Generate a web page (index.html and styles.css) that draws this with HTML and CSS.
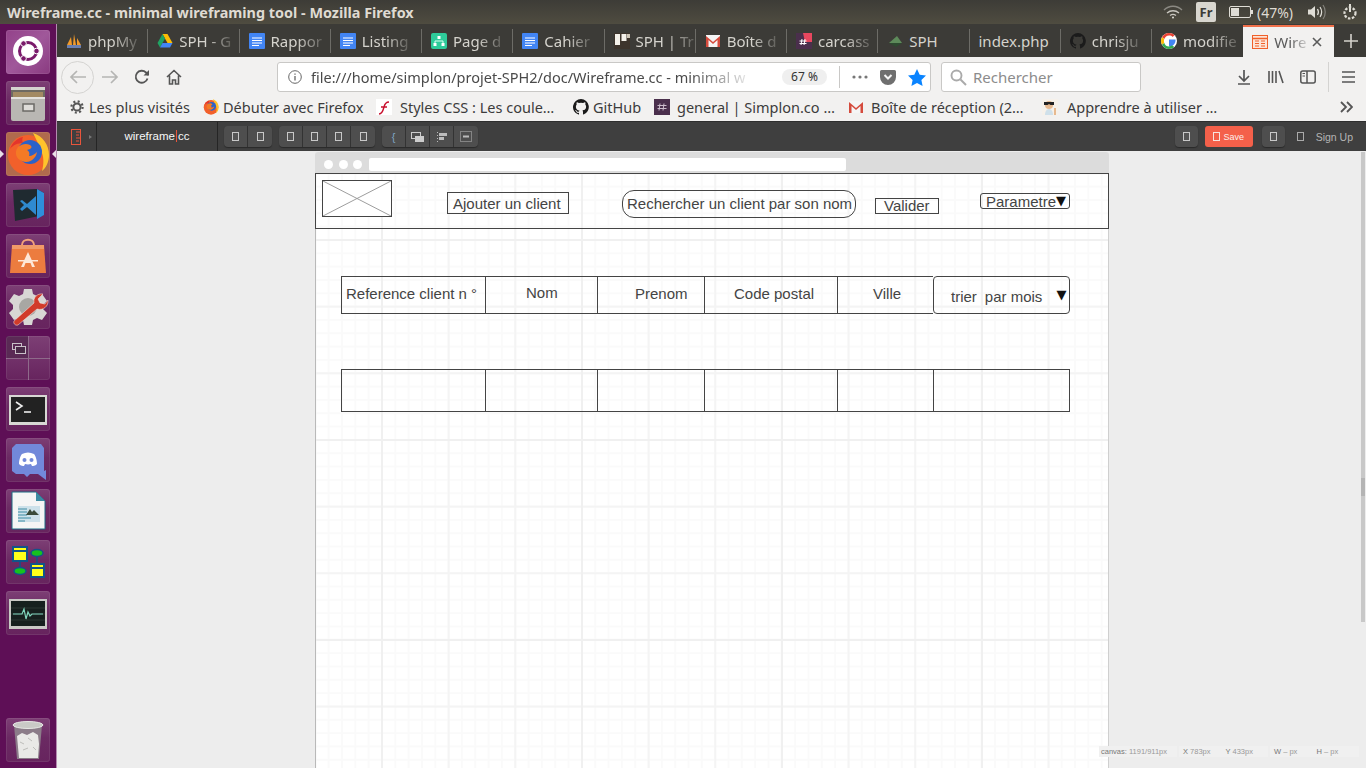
FILE: index.html
```html
<!DOCTYPE html>
<html lang="fr">
  <head>
    <meta charset="UTF-8" />
    <link rel="stylesheet" href="styles.css">
    <title>Wireframe.cc - minimal wireframing tool - Mozilla Firefox</title>
  </head>
  <body>
    <svg class="defs" width="0" height="0">
      <defs>
        <symbol id="doc" viewBox="0 0 16 16"><rect width="16" height="16" rx="1" fill="#4285f4"/><path d="M3 5h10M3 7.500h10M3 10h10M3 12.500h7" stroke="#fff" stroke-width="1"/></symbol>
        <symbol id="gmail" viewBox="0 0 16 16"><rect y="2" width="14" height="12" x="1" fill="#f5f5f5"/><path d="M1 14V3l7 6 7-6v11h-2.500V7L8 11 3.500 7v7z" fill="#d54b3d"/></symbol>
        <symbol id="slack" viewBox="0 0 16 16"><rect width="16" height="16" fill="#4a2f4c"/><path d="M6 4.500 5 11.500M10 4.500 9 11.500M3.500 6.500h9M3.500 9.500h9" stroke="#cbbccb" stroke-width="1"/></symbol>
        <symbol id="github" viewBox="0 0 16 16"><path d="M8 0a8 8 0 0 0-2.500 15.600c.4.100.5-.2.500-.4v-1.400c-2.200.5-2.700-1-2.700-1-.4-.9-.9-1.200-.9-1.200-.7-.5.100-.5.100-.5.800.100 1.200.8 1.200.8.700 1.200 1.900.9 2.300.7.100-.5.300-.9.500-1.100-1.800-.2-3.600-.9-3.600-4 0-.9.300-1.600.8-2.100-.1-.2-.4-1 .1-2.100 0 0 .7-.2 2.200.8a7.600 7.600 0 0 1 4 0c1.500-1 2.200-.8 2.200-.8.400 1.100.2 1.900.1 2.100.5.600.8 1.300.8 2.100 0 3.100-1.900 3.700-3.700 3.900.3.300.6.800.6 1.500v2.200c0 .2.100.5.600.4A8 8 0 0 0 8 0z" fill="#1b1b1b"/></symbol>
        <symbol id="firefox" viewBox="0 0 44 44">
          <circle cx="22" cy="23" r="20" fill="#f2602b"/>
          <path d="M27 1c10 3 16 12 16 22 0 7-3 13-7 16 2-7 2-15-1-20-2-6-5-12-8-18z" fill="#ffc32c"/>
          <path d="M4 17c2-6 7-11 13-12-1 2-1 4 0 6-5 0-10 2-13 6z" fill="#e4352c"/>
          <circle cx="24" cy="20" r="12" fill="#2c62c9"/>
          <path d="M12 15c4-3 8-4 12-2 2 1 2 3 0 4l-3 1c2 1 3 3 2 6 3 0 6-2 8-4-1 7-8 12-15 9-6-2-8-9-4-14z" fill="#f47a25"/>
        </symbol>
      </defs>
    </svg>

    <header class="topbar">
      <div class="win-title">Wireframe.cc - minimal wireframing tool - Mozilla Firefox</div>
      <div class="indicators">
        <svg class="ind-wifi" width="20" height="14" viewBox="0 0 20 14" fill="none" stroke="#c9c7c0" stroke-width="1.300"><path d="M1 5c5-5 13-5 18 0" stroke="#8b8983"/><path d="M4 8c3.500-3 8.500-3 12 0"/><path d="M7 10.500c2-1.500 4-1.500 6 0"/><circle cx="10" cy="12.500" r="1" fill="#e0ded8" stroke="none"/></svg>
        <span class="ind-lang">Fr</span>
        <svg class="ind-batt" width="24" height="14" viewBox="0 0 24 14"><rect x=".5" y="1.500" width="21" height="11" rx="1.500" fill="none" stroke="#dfddd6"/><rect x="2" y="3" width="8" height="8" fill="#dfddd6"/><rect x="22" y="5" width="2" height="4" fill="#dfddd6"/></svg>
        <span class="ind-pct">(47%)</span>
        <svg class="ind-vol" width="20" height="16" viewBox="0 0 20 16" fill="none"><path d="M1 5.500h3L8 2v12L4 10.500H1z" fill="#dfddd6"/><path d="M10.500 5c1.200 2 1.200 4 0 6" stroke="#dfddd6" stroke-width="1.300"/><path d="M13 3c2 3 2 7 0 10" stroke="#dfddd6" stroke-width="1.200"/><path d="M16 1c3 4 3 10 0 14" stroke="#85837d" stroke-width="1.200"/></svg>
        <svg class="ind-power" width="18" height="18" viewBox="0 0 18 18" fill="none" stroke="#dfddd6"><circle cx="9" cy="10" r="5.500" stroke-width="2.200" stroke-dasharray="2.500 1.500"/><path d="M9 1v8" stroke-width="2"/></svg>
      </div>
    </header>

    <div class="desktop">
      <nav class="launcher">
        <div class="tile tile-ubuntu">
          <svg width="44" height="44" viewBox="0 0 44 44"><circle cx="22" cy="21" r="15" fill="#fff"/><circle cx="22" cy="21" r="8.500" fill="none" stroke="#7a1a6b" stroke-width="3"/><circle cx="30.500" cy="21" r="2.800" fill="#7a1a6b" stroke="#fff"/><circle cx="17.500" cy="13.500" r="2.800" fill="#7a1a6b" stroke="#fff"/><circle cx="17.500" cy="28.500" r="2.800" fill="#7a1a6b" stroke="#fff"/></svg>
        </div>
        <div class="tile">
          <svg width="44" height="44" viewBox="0 0 44 44"><path d="M5 6h34v6H5z" fill="#d5d3cf"/><rect x="5" y="9" width="34" height="7" fill="#6e6a62"/><rect x="7" y="11" width="30" height="5" fill="#a38a63"/><rect x="5" y="16" width="34" height="24" rx="2" fill="#b9b7b3"/><rect x="5" y="16" width="34" height="2" fill="#e4e2de"/><rect x="17" y="23" width="11" height="7" fill="#dedcd8" stroke="#6b6a66" stroke-width="1.500"/></svg>
        </div>
        <div class="tile tile-firefox"><svg width="44" height="44"><use href="#firefox"/></svg></div>
        <div class="tile">
          <svg width="44" height="44" viewBox="0 0 44 44"><path d="M7 7l24-1 7 4v22l-29 6z" fill="#1f2a30"/><path d="M31 6l7 4v22l-7 4z" fill="#2e8fdb"/><path d="M14 18l4 4-4 4 2 2 5-4 9 8V13l-9 8-5-4z" fill="#2f8ad0"/></svg>
        </div>
        <div class="tile">
          <svg width="44" height="44" viewBox="0 0 44 44"><path d="M16 11c0-7 12-7 12 0" fill="none" stroke="#f2a27a" stroke-width="2"/><path d="M6 11h32l2 28H4z" fill="#ec7c3f"/><path d="M6 11h32v4H6z" fill="#f09a68"/><path d="M22 18l-7 15h3l1.500-4h5l1.500 4h3z" fill="#fde7d7"/><path d="M12 26h20v1.500H12z" fill="#fde7d7"/></svg>
        </div>
        <div class="tile">
          <svg width="44" height="44" viewBox="0 0 44 44"><path d="M18 4h8l1 5 4 2 5-2 5 7-4 4v4l4 4-5 7-5-2-4 2-1 5h-8l-1-5-4-2-5 2-5-7 4-4v-4l-4-4 5-7 5 2 4-2z" fill="#d8d7d4"/><circle cx="22" cy="22" r="9" fill="#a8a7a3"/><path d="M8 36l20-18c-1-5 3-10 9-9l-5 5 2 4 5 1 3-4c1 6-5 11-11 9L12 40c-3 1-5-2-4-4z" fill="#d13b2a" stroke="#f4f3f0" stroke-width=".5"/></svg>
        </div>
        <div class="tile tile-workspaces"><span class="ws-a"><svg width="14" height="11" viewBox="0 0 14 11" fill="none" stroke="#c9c0c8"><rect x=".5" y=".5" width="9" height="6"/><rect x="3.500" y="3.500" width="10" height="7" fill="#4a2a48"/></svg></span></div>
        <div class="tile">
          <svg width="44" height="44" viewBox="0 0 44 44"><rect x="3" y="8" width="38" height="30" fill="#d8d8d4"/><rect x="5" y="10" width="34" height="25" fill="#222"/><path d="M10 15l6 4-6 4" fill="none" stroke="#eee" stroke-width="1.600"/><path d="M18 25h7" stroke="#eee" stroke-width="1.600"/></svg>
        </div>
        <div class="tile">
          <svg width="44" height="44" viewBox="0 0 44 44"><path d="M10 6h25l3 4v26H24l-3 3-3-3H10l-4-3V10z" fill="#7289da"/><path d="M32 36l8 6V32z" fill="#7289da"/><path d="M13 26c0-5 2-9 3-10 4-2 8-2 12 0 1 1 3 5 3 10-2 2-4 2-5 2l-1-2c-2 .5-4 .5-6 0l-1 2c-1 0-3 0-5-2z" fill="#fff"/><circle cx="18.500" cy="22" r="2" fill="#7289da"/><circle cx="25.500" cy="22" r="2" fill="#7289da"/></svg>
        </div>
        <div class="tile">
          <svg width="44" height="44" viewBox="0 0 44 44"><path d="M6 3h24l9 9v28H6z" fill="#f5f5f5" stroke="#1d6c84" stroke-width="1"/><path d="M30 3l9 9h-9z" fill="#3d8ba3"/><rect x="12" y="17" width="22" height="16" fill="#cde1ea"/><path d="M12 20h9M12 23h9M12 26h9M12 29h13M12 32h7" stroke="#3d8ba3"/><path d="M20 26l4-6 2 3 2-2 5 5z" fill="#3a4a3a"/></svg>
        </div>
        <div class="tile">
          <svg width="44" height="44" viewBox="0 0 44 44"><rect x="7" y="7" width="14" height="14" fill="#ffff1a" stroke="#11548a" stroke-width="2"/><path d="M7 11h14" stroke="#11548a" stroke-width="2"/><rect x="25" y="24" width="13" height="13" fill="#ffff1a" stroke="#11548a" stroke-width="2"/><path d="M25 28h13" stroke="#11548a" stroke-width="2"/><ellipse cx="31" cy="13" rx="6" ry="3.500" fill="#15c21e" stroke="#11548a" stroke-width="1.500"/><ellipse cx="14" cy="31" rx="6" ry="3.500" fill="#15c21e" stroke="#11548a" stroke-width="1.500"/><path d="M14 21v6M31 17v7" stroke="#11548a" stroke-width="1.500"/></svg>
        </div>
        <div class="tile">
          <svg width="44" height="44" viewBox="0 0 44 44"><rect x="3" y="8" width="38" height="30" fill="#c9c9c5"/><rect x="5" y="10" width="34" height="25" fill="#16201e"/><path d="M5 17h34M5 23h34M5 29h34" stroke="#2a3633"/><path d="M7 23h9l2-5 2 10 2-7 2 4 2-2h11" fill="none" stroke="#7fd6bd" stroke-width="1.200"/></svg>
        </div>
        <div class="tile tile-trash">
          <svg width="44" height="44" viewBox="0 0 44 44"><path d="M8 7l3 34h22l3-34z" fill="#8b7c89"/><ellipse cx="22" cy="7" rx="15" ry="3.500" fill="#c9c9c6" stroke="#e7e7e5"/><path d="M11 18l5-3 5 2 6-3 5 3 1 9-1 14H13z" fill="#e9e9e7"/><path d="M14 24l4 2M22 20l4 3M17 32l5-2M27 29l3 3" stroke="#bdbdba"/></svg>
        </div>
      </nav>

      <main class="browser">
        <div class="tabstrip">
          <div class="tab">
            <svg class="fav" viewBox="0 0 16 16"><path d="M1 12 5 4l1 8zM7 12 8 1l2 11zM11 12l0-7 4 7z" fill="#f29a2a"/><rect x="1" y="12" width="14" height="3" fill="#6a7fb0"/></svg>
            <span class="tab-label">phpMy</span>
          </div>
          <div class="tab">
            <svg class="fav" viewBox="0 0 16 16"><path d="M5.500 1h5l5 9h-5z" fill="#fbbc05"/><path d="M5.500 1 .5 10l2.500 4.500 5-9z" fill="#1fa463"/><path d="M3 14.500h10l2.500-4.500h-10z" fill="#4285f4"/></svg>
            <span class="tab-label">SPH - G</span>
          </div>
          <div class="tab"><svg class="fav"><use href="#doc"/></svg><span class="tab-label">Rappor</span></div>
          <div class="tab"><svg class="fav"><use href="#doc"/></svg><span class="tab-label">Listing</span></div>
          <div class="tab">
            <svg class="fav" viewBox="0 0 16 16"><rect width="16" height="16" rx="2" fill="#2ecb9a"/><path d="M8 3v3M4 11V8h8v3" stroke="#d8fff0" fill="none"/><rect x="6.500" y="3" width="3" height="3" fill="#fff"/><rect x="2.500" y="10" width="3" height="3" fill="#fff"/><rect x="10.500" y="10" width="3" height="3" fill="#fff"/></svg>
            <span class="tab-label">Page d</span>
          </div>
          <div class="tab"><svg class="fav"><use href="#doc"/></svg><span class="tab-label">Cahier</span></div>
          <div class="tab">
            <svg class="fav" viewBox="0 0 16 16"><rect width="16" height="16" fill="#3d342c"/><rect x="1" y="1" width="5" height="11" fill="#f4f1ea"/><rect x="7.500" y="1" width="5" height="7" fill="#f4f1ea"/><rect x="13" y="1" width="3" height="4" fill="#cfc7b8"/></svg>
            <span class="tab-label">SPH | Tr</span>
          </div>
          <div class="tab"><svg class="fav"><use href="#gmail"/></svg><span class="tab-label">Boîte d</span></div>
          <div class="tab">
            <svg class="fav" viewBox="0 0 16 16"><rect width="16" height="16" fill="#4a2f4c"/><path d="M7 0h9v9H9z" fill="#e8475f"/><path d="M6 6 5 12M9 6 8 12M3.500 8h7M3.500 10.500h7" stroke="#fff"/></svg>
            <span class="tab-label">carcass</span>
          </div>
          <div class="tab">
            <svg class="fav" viewBox="0 0 16 16"><path d="M2 10 10 3l5 7z" fill="#5d8a5a"/><path d="M2 10h13l-6 4z" fill="#2e4a30"/></svg>
            <span class="tab-label tab-label-full">SPH</span>
          </div>
          <div class="tab tab-nofav"><span class="tab-label tab-label-full">index.php</span></div>
          <div class="tab"><svg class="fav"><use href="#github"/></svg><span class="tab-label">chrisju</span></div>
          <div class="tab">
            <svg class="fav" viewBox="0 0 16 16"><circle cx="8" cy="8" r="8" fill="#fff"/><path d="M8 6.500h6.500c.4 3.500-2 7-6.500 7" fill="#4285f4"/><path d="M8 2.500c1.500 0 2.800.5 3.700 1.400l1.900-1.900C12.200.8 10.200 0 8 0 5 0 2.300 1.700 1 4.300l2.300 1.800C4 4 5.800 2.500 8 2.500z" fill="#ea4335"/><path d="M3.300 6.100 1 4.300a8 8 0 0 0 0 7.400l2.300-1.800a5 5 0 0 1 0-3.800z" fill="#fbbc05"/><path d="M8 13.500c-2.200 0-4-1.400-4.700-3.600L1 11.700C2.300 14.300 5 16 8 16c2 0 3.900-.7 5.300-2l-2.200-1.700c-.8.700-1.900 1.200-3.100 1.200z" fill="#34a853"/></svg>
            <span class="tab-label">modifie</span>
          </div>
          <div class="tab tab-active">
            <svg class="fav" viewBox="0 0 16 16" fill="none"><rect x=".5" y="1.500" width="15" height="13" fill="#fde4d6" stroke="#f0602a"/><path d="M1 4.500h14" stroke="#f0602a" stroke-width="1.500"/><path d="M3 7h4M3 9.500h4M3 12h4M9 7h4M9 9.500h4M9 12h4" stroke="#f0602a"/></svg>
            <span class="tab-label">Wire</span>
            <svg class="tab-close" width="10" height="10" viewBox="0 0 10 10"><path d="M1 1l8 8M9 1 1 9" stroke="#5b5b5b" stroke-width="1.600"/></svg>
          </div>
          <svg class="tab-new" width="14" height="14" viewBox="0 0 14 14"><path d="M7 0v14M0 7h14" stroke="#d5d3cd" stroke-width="1.600"/></svg>
        </div>

        <div class="navbar">
          <button class="nav-back"><svg width="18" height="16" viewBox="0 0 18 16" fill="none" stroke="#b5b5b3" stroke-width="1.700"><path d="M17 8H2M8 2 2 8l6 6"/></svg></button>
          <svg class="nav-fwd" width="18" height="16" viewBox="0 0 18 16" fill="none" stroke="#b5b5b3" stroke-width="1.700"><path d="M1 8h15M10 2l6 6-6 6"/></svg>
          <svg class="nav-reload" width="16" height="16" viewBox="0 0 16 16" fill="none" stroke="#555" stroke-width="1.800"><path d="M13.500 9.500A6 6 0 1 1 12 3.500L14.500 6"/><path d="M15 1v5.500H9.500" fill="#555" stroke="none"/></svg>
          <svg class="nav-home" width="16" height="16" viewBox="0 0 16 16" fill="none" stroke="#555" stroke-width="1.600"><path d="M1 8l7-6.500L15 8M3.500 6.500V15h3v-4h3v4h3V6.500"/></svg>
          <div class="urlbar">
            <svg class="url-info" width="14" height="14" viewBox="0 0 14 14" fill="none" stroke="#666"><circle cx="7" cy="7" r="6.300"/><path d="M7 6v4.500M7 3.500v1.300" stroke-width="1.300"/></svg>
            <span class="url-text">file:///home/simplon/projet-SPH2/doc/Wireframe.cc - minimal w</span>
            <span class="url-zoom">67 %</span>
            <span class="url-sep"></span>
            <svg class="url-dots" width="16" height="4" viewBox="0 0 16 4" fill="#777"><circle cx="2" cy="2" r="1.600"/><circle cx="8" cy="2" r="1.600"/><circle cx="14" cy="2" r="1.600"/></svg>
            <svg class="url-pocket" width="16" height="15" viewBox="0 0 16 15"><path d="M1.500 0h13A1.500 1.500 0 0 1 16 1.500V7A8 8 0 0 1 0 7V1.500A1.500 1.500 0 0 1 1.500 0z" fill="#6f6f6f"/><path d="M4.500 5 8 8.500 11.500 5" fill="none" stroke="#f5f5f5" stroke-width="2"/></svg>
            <svg class="url-star" width="18" height="17" viewBox="0 0 18 17"><path d="M9 0l2.700 5.800 6.300.8-4.600 4.300 1.200 6.100L9 14l-5.600 3 1.200-6.100L0 6.600l6.300-.8z" fill="#0a84ff"/></svg>
          </div>
          <div class="searchbar">
            <svg width="17" height="17" viewBox="0 0 17 17" fill="none" stroke="#aaa" stroke-width="1.900"><circle cx="6.500" cy="6.500" r="5"/><path d="M10.500 10.500 16 16"/></svg>
            <span>Rechercher</span>
          </div>
          <div class="nav-tools">
            <svg width="16" height="16" viewBox="0 0 16 16" fill="none" stroke="#555" stroke-width="1.700"><path d="M8 1v10M3 7l5 5 5-5M2 15h12"/></svg>
            <svg width="16" height="14" viewBox="0 0 16 14" fill="none" stroke="#555" stroke-width="1.600"><path d="M1 1v12M4.500 1v12M8 1v12M11 1l4 12"/></svg>
            <svg width="16" height="14" viewBox="0 0 16 14" fill="none" stroke="#555" stroke-width="1.500"><rect x=".8" y="1" width="14.400" height="12" rx="2"/><path d="M7 1v12"/><path d="M2.500 3.500H5M2.500 6H5" stroke-width="1"/></svg>
            <span class="tools-sep"></span>
            <svg class="tools-menu" width="13" height="12" viewBox="0 0 13 12" stroke="#555" stroke-width="1.600"><path d="M0 1h13M0 6h13M0 11h13"/></svg>
          </div>
        </div>

        <div class="bookmarks">
          <div class="bm bm-1">
            <svg width="14" height="14" viewBox="0 0 14 14" fill="none" stroke="#555"><circle cx="7" cy="7" r="3.600" stroke-width="2"/><circle cx="7" cy="7" r="5.600" stroke-width="2.200" stroke-dasharray="2 2.400"/></svg>
            <span>Les plus visités</span>
          </div>
          <div class="bm bm-2"><svg width="16" height="16" viewBox="0 0 44 44"><use href="#firefox"/></svg><span>Débuter avec Firefox</span></div>
          <div class="bm bm-3">
            <svg width="16" height="16" viewBox="0 0 16 16"><rect width="16" height="16" fill="#fff"/><path d="M3 15c3 0 4-3 5-7 .7-3 1.500-5 5-5M5 8h6" fill="none" stroke="#c8102e" stroke-width="1.400"/></svg>
            <span>Styles CSS : Les coule…</span>
          </div>
          <div class="bm bm-4"><svg width="16" height="16"><use href="#github"/></svg><span>GitHub</span></div>
          <div class="bm bm-5"><svg width="16" height="16"><use href="#slack"/></svg><span>general | Simplon.co …</span></div>
          <div class="bm bm-6"><svg width="16" height="16"><use href="#gmail"/></svg><span>Boîte de réception (2…</span></div>
          <div class="bm bm-7">
            <svg width="16" height="16" viewBox="0 0 16 16"><rect width="16" height="16" fill="#f6f1ea"/><path d="M3 16c0-4 2-6 4-6s4 2 4 6z" fill="#cfe0ea"/><circle cx="7" cy="6" r="4" fill="#e7b98f"/><path d="M2 3h10v3H8.500L7 5 5.500 6H2z" fill="#222"/><path d="M12 16V9l2 0v7z" fill="#e7b98f"/></svg>
            <span>Apprendre à utiliser …</span>
          </div>
          <svg class="bm-more" width="13" height="12" viewBox="0 0 13 12" fill="none" stroke="#555" stroke-width="1.800"><path d="M1 1l5 5-5 5M7 1l5 5-5 5"/></svg>
        </div>

        <div class="wf-toolbar">
          <div class="wf-brand">
            <svg width="10" height="16" viewBox="0 0 10 16" fill="none" stroke="#e8553c"><rect x=".5" y=".5" width="9" height="15"/><path d="M5 3h4M5 6h3M5 9h4M5 12h3" /></svg>
            <span class="wf-caret"></span>
          </div>
          <div class="wf-logo">wireframe<i></i>cc</div>
          <div class="wf-tools">
            <div class="btn-group"><span class="btn"><b class="sq"></b></span><span class="btn"><b class="sq"></b></span></div>
            <div class="btn-group"><span class="btn"><b class="sq"></b></span><span class="btn"><b class="sq"></b></span><span class="btn"><b class="sq"></b></span><span class="btn"><b class="sq"></b></span></div>
            <div class="btn-group">
              <span class="btn"><em class="brace">{</em></span>
              <span class="btn"><svg width="13" height="10" viewBox="0 0 13 10"><rect x=".5" y=".5" width="9" height="6" fill="none" stroke="#ccc"/><rect x="4" y="4" width="9" height="6" fill="#ccc"/></svg></span>
              <span class="btn"><svg width="10" height="10" viewBox="0 0 10 10" fill="#bbb"><rect x="2" y="1" width="8" height="3"/><rect x="2" y="5" width="5" height="3"/><path d="M0 0h1v1H0zM0 3h1v1H0zM0 6h1v1H0zM0 9h1v1H0z"/></svg></span>
              <span class="btn"><svg width="12" height="11" viewBox="0 0 12 11" fill="none" stroke="#bbb" stroke-dasharray="1 1"><rect x=".5" y=".5" width="11" height="10"/><path d="M3 5.500h6" stroke-dasharray="none" stroke-width="2"/></svg></span>
            </div>
          </div>
          <div class="wf-account">
            <span class="btn btn-solo"><b class="sq"></b></span>
            <span class="btn-save"><b class="sq sq-light"></b>Save</span>
            <span class="btn btn-solo"><b class="sq"></b></span>
            <b class="sq sq-plain"></b>
            <span class="signup">Sign Up</span>
          </div>
        </div>

        <div class="canvas">
          <div class="sheet">
            <div class="sheet-bar">
              <span class="dot"></span><span class="dot"></span><span class="dot"></span>
              <span class="sheet-addr"></span>
            </div>
            <div class="sheet-page">
              <div class="wf wf-header"></div>
              <svg class="wf wf-image" viewBox="0 0 70 37" preserveAspectRatio="none"><path d="M0 0l70 37M70 0 0 37" stroke="#999" fill="none"/></svg>
              <div class="wf wf-add">Ajouter un client</div>
              <div class="wf wf-search">Rechercher un client par son nom</div>
              <div class="wf wf-submit">Valider</div>
              <div class="wf wf-param">Parametre<span class="arrow">▼</span></div>

              <div class="wf-row wf-row-head">
                <div class="cell cell-ref">Reference client n °</div>
                <div class="cell cell-nom">Nom</div>
                <div class="cell cell-prenom">Prenom</div>
                <div class="cell cell-code">Code postal</div>
                <div class="cell cell-ville">Ville</div>
                <div class="cell cell-sort"><span>trier</span><span>par mois</span><span class="arrow">▼</span></div>
              </div>
              <div class="wf-row wf-row-body">
                <div class="cell cell-ref"></div>
                <div class="cell cell-nom"></div>
                <div class="cell cell-prenom"></div>
                <div class="cell cell-code"></div>
                <div class="cell cell-ville cell-ville-end"></div>
                <div class="cell cell-empty"></div>
              </div>
            </div>
          </div>

          <div class="status">
            <div class="status-box status-canvas"><b>canvas:</b> 1191/911px</div>
            <div class="status-box status-pos"><span><b>X</b> 783px</span><span><b>Y</b> 433px</span></div>
            <div class="status-box status-pos"><span><b>W</b> – px</span><span><b>H</b> – px</span></div>
          </div>
          <div class="scrollbar"><span></span></div>
        </div>
      </main>
    </div>
  </body>
</html>
```

FILE: styles.css
```css
* {
  box-sizing: border-box;
}

html,
body {
  height: 100%;
}

body {
  margin: 0;
  display: flex;
  flex-direction: column;
  overflow: hidden;
  font-family: "Noto Sans", "Open Sans", sans-serif;
  background: #ededed;
}

.defs {
  position: absolute;
}

svg {
  display: block;
  flex: none;
}

/* ubuntu top bar */
.topbar {
  flex: 0 0 24px;
  display: flex;
  align-items: center;
  justify-content: space-between;
  padding-left: 7px;
  background: linear-gradient(#3d3c37, #4f4c40);
}

.win-title {
  color: #dfdbd2;
  font-size: 14.4px;
  font-weight: 700;
  white-space: nowrap;
}

.indicators {
  display: flex;
  align-items: center;
  height: 24px;
}

.ind-wifi {
  margin-right: 13px;
}

.ind-lang {
  width: 20px;
  height: 20px;
  margin-right: 13px;
  background: #d8d6cf;
  border-radius: 2px;
  color: #3c3b37;
  font-size: 13px;
  font-weight: 700;
  line-height: 20px;
  text-align: center;
}

.ind-batt {
  margin-right: 4px;
}

.ind-pct {
  width: 40px;
  margin-right: 10px;
  color: #dfdbd2;
  font-size: 14px;
  white-space: nowrap;
}

.ind-vol {
  margin-right: 14px;
}

.ind-power {
  margin-right: 7px;
}

.desktop {
  flex: 1;
  display: flex;
  min-height: 0;
}

/* launcher */
.launcher {
  flex: 0 0 57px;
  display: flex;
  flex-direction: column;
  gap: 7px;
  padding: 6px 0 6px 6px;
  background: #5e0f56;
  border-right: 1px solid #b58bb0;
}

.tile {
  flex: 0 0 44px;
  width: 44px;
  border-radius: 3px;
  background: linear-gradient(#7d3f75, #6b2a63 45%, #67245e);
  box-shadow: inset 0 0 0 1px rgba(255, 255, 255, 0.08);
}

.tile-ubuntu {
  background: linear-gradient(135deg, #93428a, #a0589a 50%, #8a3a80);
}

.tile-firefox {
  position: relative;
  background: #b06a4d;
}

/* the two running-app pips either side of the focused launcher icon */
.tile-firefox::before,
.tile-firefox::after {
  content: "";
  position: absolute;
  top: 18px;
  border-top: 4px solid transparent;
  border-bottom: 4px solid transparent;
}

.tile-firefox::before {
  left: -6px;
  border-left: 4px solid #e8dfe6;
}

.tile-firefox::after {
  right: -6px;
  border-right: 4px solid #e8dfe6;
}

.tile-workspaces {
  position: relative;
  background:
    linear-gradient(#8e6a8a, #8e6a8a) 22px 0 / 1px 100% no-repeat,
    linear-gradient(#8e6a8a, #8e6a8a) 0 22px / 100% 1px no-repeat,
    linear-gradient(#5a2a55, #5a2a55) 0 0 / 22px 22px no-repeat,
    linear-gradient(#7d3f75, #67245e);
}

.ws-a {
  position: absolute;
  top: 7px;
  left: 6px;
}

.tile-trash {
  margin-top: auto;
}

/* tabs */
.browser {
  flex: 1;
  min-width: 0;
  display: flex;
  flex-direction: column;
}

.tabstrip {
  flex: 0 0 33px;
  display: flex;
  align-items: center;
  background: #3c3b37;
}

.tab {
  flex: 0 0 91.25px;
  display: flex;
  align-items: center;
  gap: 6px;
  height: 24px;
  padding-left: 9px;
  border-right: 1px solid #6d6c67;
  color: #d5d3cd;
  font-size: 15px;
}

.tab:nth-child(13) {
  border-right: 0;
}

.fav {
  flex: none;
  width: 16px;
  height: 16px;
}

.tab-label {
  white-space: nowrap;
  -webkit-mask-image: linear-gradient(to right, #000 50%, rgba(0, 0, 0, 0.25));
  mask-image: linear-gradient(to right, #000 50%, rgba(0, 0, 0, 0.25));
}

.tab-label-full {
  -webkit-mask-image: none;
  mask-image: none;
}

.tab-active {
  align-self: flex-end;
  flex-basis: 90px;
  height: 32px;
  padding: 0 12px 0 9px;
  border-top: 2px solid #f0704a;
  border-right: 0;
  background: #f2f1f0;
  color: #5b5b5b;
}

.tab-close {
  margin-left: auto;
}

.tab-new {
  margin-left: 10px;
}

/* nav bar */
.navbar {
  flex: 0 0 38px;
  display: flex;
  align-items: center;
  padding: 2px 0 0 4px;
  background: #f2f1f0;
}

.nav-back {
  flex: none;
  display: flex;
  align-items: center;
  justify-content: center;
  width: 33px;
  height: 33px;
  padding: 0;
  background: #f2f1f0;
  border: 1px solid #d4d3d1;
  border-radius: 50%;
}

.nav-fwd {
  margin-left: 7px;
}

.nav-reload {
  margin-left: 15px;
}

.nav-home {
  margin-left: 16px;
}

.urlbar {
  flex: none;
  display: flex;
  align-items: center;
  width: 654px;
  height: 30px;
  margin-left: 95px;
  padding-left: 10px;
  background: #fff;
  border: 1px solid #c9c8c6;
  border-radius: 3px;
}

.url-text {
  flex: none;
  width: 445px;
  margin-left: 9px;
  color: #4a4a4a;
  font-size: 14.5px;
  white-space: nowrap;
  -webkit-mask-image: linear-gradient(to right, #000 85%, transparent);
  mask-image: linear-gradient(to right, #000 85%, transparent);
}

.url-zoom {
  width: 45px;
  height: 16px;
  margin-left: 26px;
  background: #efefef;
  border-radius: 8px;
  color: #333;
  font-size: 12px;
  line-height: 16px;
  text-align: center;
}

.url-sep {
  width: 1px;
  height: 22px;
  margin-left: 12px;
  background: #c9c8c6;
}

.url-dots {
  margin-left: 12px;
}

.url-pocket {
  margin-left: 12px;
}

.url-star {
  margin-left: 12px;
}

.searchbar {
  flex: none;
  display: flex;
  align-items: center;
  gap: 6px;
  width: 200px;
  height: 30px;
  margin-left: 10px;
  padding-left: 8px;
  background: #fff;
  border: 1px solid #c9c8c6;
  border-radius: 3px;
  color: #8c8c8c;
  font-size: 15px;
}

.nav-tools {
  display: flex;
  align-items: center;
  gap: 16px;
  margin-left: 95px;
}

.tools-sep {
  width: 1px;
  height: 30px;
  margin-left: -4px;
  background: #d4d3d1;
}

.tools-menu {
  margin-left: -3px;
}

/* bookmarks */
.bookmarks {
  flex: 0 0 26px;
  display: flex;
  align-items: center;
  padding: 0 0 2px 13px;
  background: #f2f1f0;
  color: #3c3c3c;
  font-size: 14.5px;
}

.bm {
  flex: none;
  display: flex;
  align-items: center;
  gap: 4px;
  white-space: nowrap;
}

.bm-1 {
  width: 133px;
  gap: 5px;
}

.bm-2 {
  width: 173px;
}

.bm-3 {
  width: 197px;
  gap: 8px;
}

.bm-4 {
  width: 81px;
}

.bm-5 {
  width: 194px;
  gap: 7px;
}

.bm-6 {
  width: 194px;
  gap: 7px;
}

.bm-7 {
  width: 298px;
  gap: 9px;
}

/* wireframe.cc toolbar */
.wf-toolbar {
  flex: 0 0 30px;
  display: flex;
  align-items: center;
  background: #3f3f3f;
  border-top: 1px solid #2e2e2e;
}

.wf-brand {
  display: flex;
  align-items: center;
  width: 40px;
  height: 100%;
  padding-left: 14px;
  border-right: 1px solid #252525;
}

.wf-caret {
  width: 0;
  height: 0;
  margin-left: 8px;
  border-top: 2px solid transparent;
  border-bottom: 2px solid transparent;
  border-left: 3px solid #777;
}

.wf-logo {
  width: 121px;
  height: 100%;
  border-right: 1px solid #252525;
  color: #f7f7f7;
  font-family: "Liberation Sans", Arial, sans-serif;
  font-size: 11.5px;
  line-height: 28px;
  text-align: center;
}

.wf-logo i {
  display: inline-block;
  width: 1px;
  height: 12px;
  margin: 0 1px;
  background: #e8553c;
  vertical-align: -2px;
}

.wf-tools {
  display: flex;
  gap: 7px;
  margin-left: 6px;
}

.btn-group {
  display: flex;
  height: 21px;
  background: #4e4e4e;
  border-radius: 4px;
  box-shadow: 0 1px 1px #2a2a2a;
}

.btn {
  display: flex;
  align-items: center;
  justify-content: center;
  width: 24px;
  height: 21px;
  border-right: 1px solid #333;
}

.btn:last-child {
  border-right: 0;
}

.sq {
  display: block;
  width: 7px;
  height: 9px;
  background: #555;
  border: 1px solid #c8c8c8;
}

.brace {
  color: #7fa6c4;
  font-family: "Liberation Sans", Arial, sans-serif;
  font-size: 11px;
  font-style: normal;
}

.wf-account {
  display: flex;
  align-items: center;
  margin-left: auto;
}

.btn-solo {
  width: 23px;
  background: #4e4e4e;
  border: 0;
  border-radius: 4px;
  box-shadow: 0 1px 1px #2a2a2a;
}

.btn-save {
  display: flex;
  align-items: center;
  justify-content: center;
  gap: 3px;
  width: 48px;
  height: 21px;
  margin: 0 9px 0 7px;
  background: #f4604a;
  border-radius: 3px;
  color: #fbeeea;
  font-family: "Liberation Sans", Arial, sans-serif;
  font-size: 9px;
}

.sq-light {
  background: #f4604a;
  border-color: #f7e4df;
}

.sq-plain {
  margin-left: 12px;
  background: transparent;
  border-color: #aaa;
}

.signup {
  margin: 0 13px 0 12px;
  color: #b5b5b5;
  font-family: "Liberation Sans", Arial, sans-serif;
  font-size: 10.5px;
}

/* canvas */
.canvas {
  position: relative;
  flex: 1;
  min-height: 0;
  overflow: hidden;
  background: #ededed;
}

.sheet {
  width: 794px;
  height: 100%;
  margin: 1px 0 0 258px;
}

.sheet-bar {
  display: flex;
  align-items: center;
  height: 21px;
  padding: 3px 0 0 9px;
  background: #dcdcdc;
  border-radius: 3px 3px 0 0;
}

.dot {
  width: 9px;
  height: 9px;
  margin-right: 5.500px;
  background: #fff;
  border-radius: 50%;
}

.sheet-addr {
  width: 477px;
  height: 13px;
  margin-left: 1px;
  background: #fff;
  border-radius: 2px;
}

.sheet-page {
  position: relative;
  height: 100%;
  border-left: 1px solid #b9b9b9;
  border-right: 1px solid #cfcfcf;
  background-color: #fff;
  background-image:
    linear-gradient(to right, #f0f0f0 2px, transparent 2px),
    linear-gradient(to bottom, #f0f0f0 2px, transparent 2px),
    linear-gradient(to right, #f4f4f4 2px, transparent 2px),
    linear-gradient(to bottom, #f4f4f4 2px, transparent 2px),
    linear-gradient(to right, #fafafa 2px, transparent 2px),
    linear-gradient(to bottom, #fafafa 2px, transparent 2px);
  background-size:
    200px 100%,
    100% 200px,
    66.667px 100%,
    100% 66.667px,
    13.333px 100%,
    100% 13.333px;
  background-position:
    65px 0,
    0 66px,
    65px 0,
    0 66px,
    65px 0,
    0 66px;
}

/* items on the wireframe, placed as on the drawing tool's canvas */
.wf {
  position: absolute;
  border: 1px solid #444;
  color: #444;
  font-family: "Liberation Sans", Arial, sans-serif;
  font-size: 15px;
  white-space: nowrap;
}

.wf-header {
  top: 0;
  left: -1px;
  width: 794px;
  height: 56px;
}

.wf-image {
  top: 7px;
  left: 6px;
  width: 70px;
  height: 37px;
  background: #fff;
  overflow: hidden;
}

.wf-add {
  top: 19px;
  left: 131px;
  width: 122px;
  height: 22px;
  padding-left: 5px;
  line-height: 22px;
}

.wf-search {
  top: 17px;
  left: 306px;
  width: 234px;
  height: 28px;
  padding-left: 4px;
  border-radius: 12px;
  line-height: 26px;
}

.wf-submit {
  top: 25px;
  left: 559px;
  width: 64px;
  height: 16px;
  padding-left: 8px;
  line-height: 13px;
}

.wf-param {
  top: 20px;
  left: 664px;
  display: flex;
  width: 90px;
  height: 16px;
  padding-left: 5px;
  border-radius: 3px;
  line-height: 16px;
}

.arrow {
  color: #111;
  font-family: "DejaVu Sans", sans-serif;
  font-size: 13px;
}

.wf-param .arrow {
  line-height: 14px;
}

.wf-row {
  position: absolute;
  left: 25px;
  display: flex;
  width: 729px;
  color: #444;
  font-family: "Liberation Sans", Arial, sans-serif;
  font-size: 15px;
}

.wf-row-head {
  top: 103px;
  height: 38px;
}

.wf-row-body {
  top: 196px;
  height: 43px;
}

.cell {
  display: flex;
  align-items: center;
  border-top: 1px solid #444;
  border-bottom: 1px solid #444;
  border-right: 1px solid #444;
  white-space: nowrap;
}

.cell-ref {
  width: 145px;
  padding: 0 0 4px 4px;
  border-left: 1px solid #444;
}

.cell-nom {
  width: 112px;
  padding: 0 0 6px 40px;
}

.cell-prenom {
  width: 107px;
  padding: 0 0 4px 37px;
}

.cell-code {
  width: 133px;
  padding: 0 0 4px 29px;
}

.cell-ville {
  width: 95px;
  padding: 0 0 4px 35px;
  border-right: 0;
}

.cell-ville-end {
  width: 96px;
  border-right: 1px solid #444;
}

.cell-sort {
  flex: 1;
  padding: 2px 0 0 17px;
  border: 1px solid #444;
  border-radius: 4px;
}

.cell-sort span:nth-child(2) {
  margin-left: 8px;
}

.cell-sort .arrow {
  margin: -3px 0 0 14px;
}

.cell-empty {
  flex: 1;
}

.status {
  position: absolute;
  right: 7px;
  bottom: 11px;
  display: flex;
  gap: 2px;
  color: #999;
  font-family: "Liberation Sans", Arial, sans-serif;
  font-size: 7.5px;
  line-height: 11px;
}

.status b {
  color: #777;
  font-weight: 400;
}

.status-box {
  height: 11px;
  background: #f0f0f0;
  white-space: nowrap;
}

.status-canvas {
  width: 78px;
  padding-left: 2px;
}

.status-pos {
  display: flex;
  width: 89px;
  padding-left: 4px;
}

.status-pos span {
  width: 43px;
}

.scrollbar {
  position: absolute;
  top: 1px;
  right: 1px;
  width: 4px;
  height: 470px;
  background: #c8c8c8;
}

.scrollbar span {
  display: block;
  height: 18px;
  margin-top: 326px;
  background: #b4b4b4;
}
```
